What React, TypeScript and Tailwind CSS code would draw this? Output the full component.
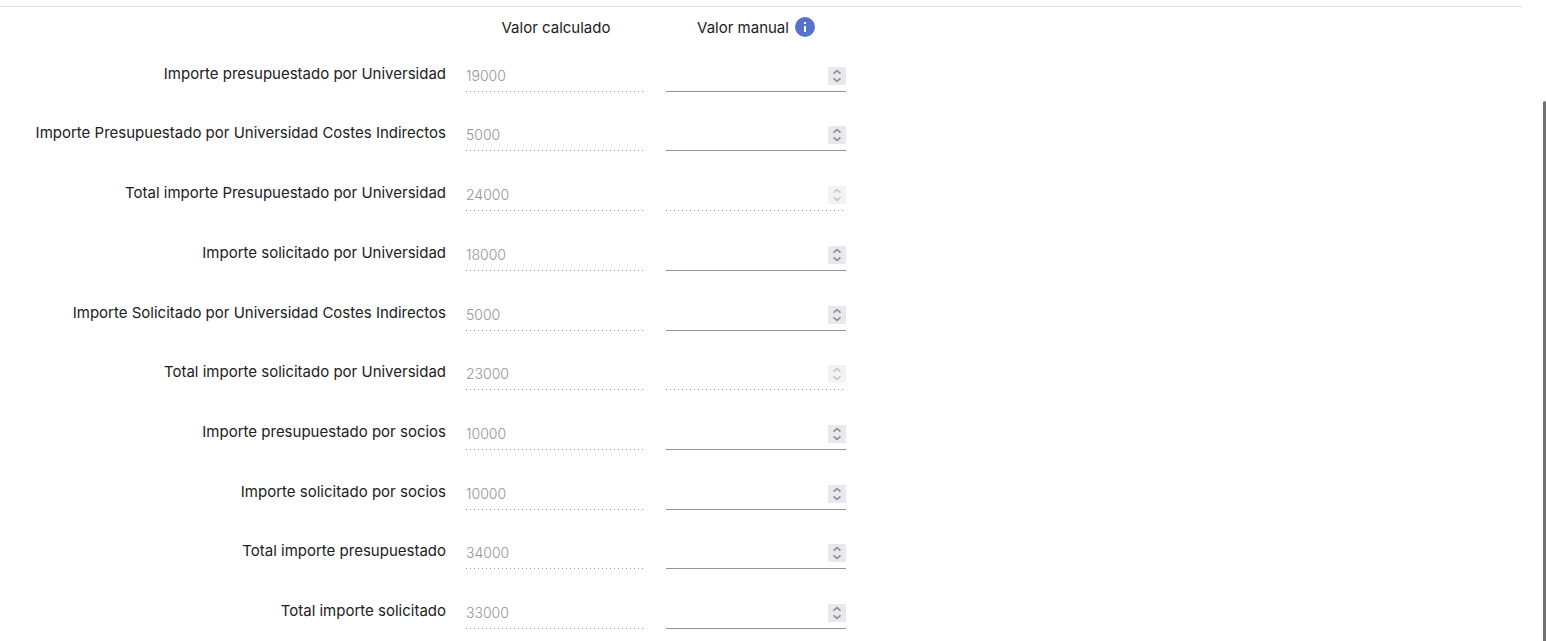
import React, { useState } from "react";

type Row = { id: string; label: string; value: number; locked?: boolean };

const rows: Row[] = [
  { id: "presupuestado-universidad", label: "Importe presupuestado por Universidad", value: 19000 },
  { id: "presupuestado-indirectos", label: "Importe Presupuestado por Universidad Costes Indirectos", value: 5000 },
  { id: "total-presupuestado-universidad", label: "Total importe Presupuestado por Universidad", value: 24000, locked: true },
  { id: "solicitado-universidad", label: "Importe solicitado por Universidad", value: 18000 },
  { id: "solicitado-indirectos", label: "Importe Solicitado por Universidad Costes Indirectos", value: 5000 },
  { id: "total-solicitado-universidad", label: "Total importe solicitado por Universidad", value: 23000, locked: true },
  { id: "presupuestado-socios", label: "Importe presupuestado por socios", value: 10000 },
  { id: "solicitado-socios", label: "Importe solicitado por socios", value: 10000 },
  { id: "total-presupuestado", label: "Total importe presupuestado", value: 34000 },
  { id: "total-solicitado", label: "Total importe solicitado", value: 33000 },
];

const columns = "grid grid-cols-[446px_180px_180px] gap-x-5";
const dotted =
  "bg-[linear-gradient(to_right,#949494_1px,transparent_1px)] bg-[length:4px_1px] bg-[position:left_bottom] bg-repeat-x";

function InfoIcon() {
  return (
    <svg viewBox="0 0 20 20" className="size-5" aria-hidden="true">
      <circle cx="10" cy="10" r="10" fill="#5573cd" />
      <path d="M9 5h2v2H9zM9 9h2v6H9z" fill="#fff" />
    </svg>
  );
}

function Stepper({ disabled, label, onStep }: { disabled?: boolean; label: string; onStep: (n: number) => void }) {
  const button = "flex h-[9px] w-[18px] items-center justify-center";
  return (
    <div className={`flex size-[18px] shrink-0 flex-col bg-[#e9e9ed] text-[#8f8f9d] ${disabled ? "opacity-50" : ""}`}>
      <button type="button" disabled={disabled} aria-label={`Aumentar ${label}`} className={button} onClick={() => onStep(1)}>
        <svg viewBox="0 0 18 9" className="h-[9px] w-[18px]" fill="none" stroke="currentColor" strokeWidth="1.7">
          <path d="M5.5 6.7 9 3.7 12.5 6.7" />
        </svg>
      </button>
      <button type="button" disabled={disabled} aria-label={`Disminuir ${label}`} className={button} onClick={() => onStep(-1)}>
        <svg viewBox="0 0 18 9" className="h-[9px] w-[18px]" fill="none" stroke="currentColor" strokeWidth="1.7">
          <path d="M5.5 2.3 9 5.3 12.5 2.3" />
        </svg>
      </button>
    </div>
  );
}

function AmountRow({ row }: { row: Row }) {
  const [manual, setManual] = useState("");
  const step = (n: number) => setManual(String(Number(manual || 0) + n));
  return (
    <div className={`${columns} items-end pb-2`}>
      <label htmlFor={row.id} className="pb-2 text-right leading-5 whitespace-nowrap">
        {row.label}
      </label>
      <input
        id={row.id}
        type="text"
        disabled
        value={row.value}
        className={`w-full min-w-0 pb-1.5 text-[14px] leading-5 font-light text-[#949494] ${dotted}`}
      />
      <div className={`flex items-center ${row.locked ? `${dotted} pb-[7px]` : "border-b border-[#949494] pb-1.5"}`}>
        <input
          type="number"
          aria-label={`${row.label}, valor manual`}
          disabled={row.locked}
          value={manual}
          onChange={(e) => setManual(e.target.value)}
          className="h-[18px] min-w-0 flex-1 appearance-none text-[14px] outline-none [-moz-appearance:textfield] [&::-webkit-inner-spin-button]:appearance-none"
        />
        <Stepper disabled={row.locked} label={row.label} onStep={step} />
      </div>
    </div>
  );
}

export default function App() {
  return (
    <div className="flex h-screen overflow-hidden bg-white font-['Inter',sans-serif] text-[15px] text-[#212121]">
      <main className="min-w-0 flex-1 pt-1.5">
        <hr className="mr-[21px] border-t border-[#e0e0e0]" />
        <form>
          <div className={`${columns} items-start pt-[10px] pb-px`}>
            <span />
            <span className="text-center leading-[22px]">Valor calculado</span>
            <span className="flex items-start justify-center gap-1.5 leading-[22px]">
              Valor manual
              <button type="button" aria-label="Información">
                <InfoIcon />
              </button>
            </span>
          </div>
          <div className="grid min-h-[597px] auto-rows-fr">
            {rows.map((row) => (
              <AmountRow key={row.id} row={row} />
            ))}
          </div>
        </form>
      </main>
      <div className="flex w-[3px] flex-col pt-[101px]" aria-hidden="true">
        <div className="flex-1 rounded-t-xs bg-[#707272]" />
      </div>
    </div>
  );
}
